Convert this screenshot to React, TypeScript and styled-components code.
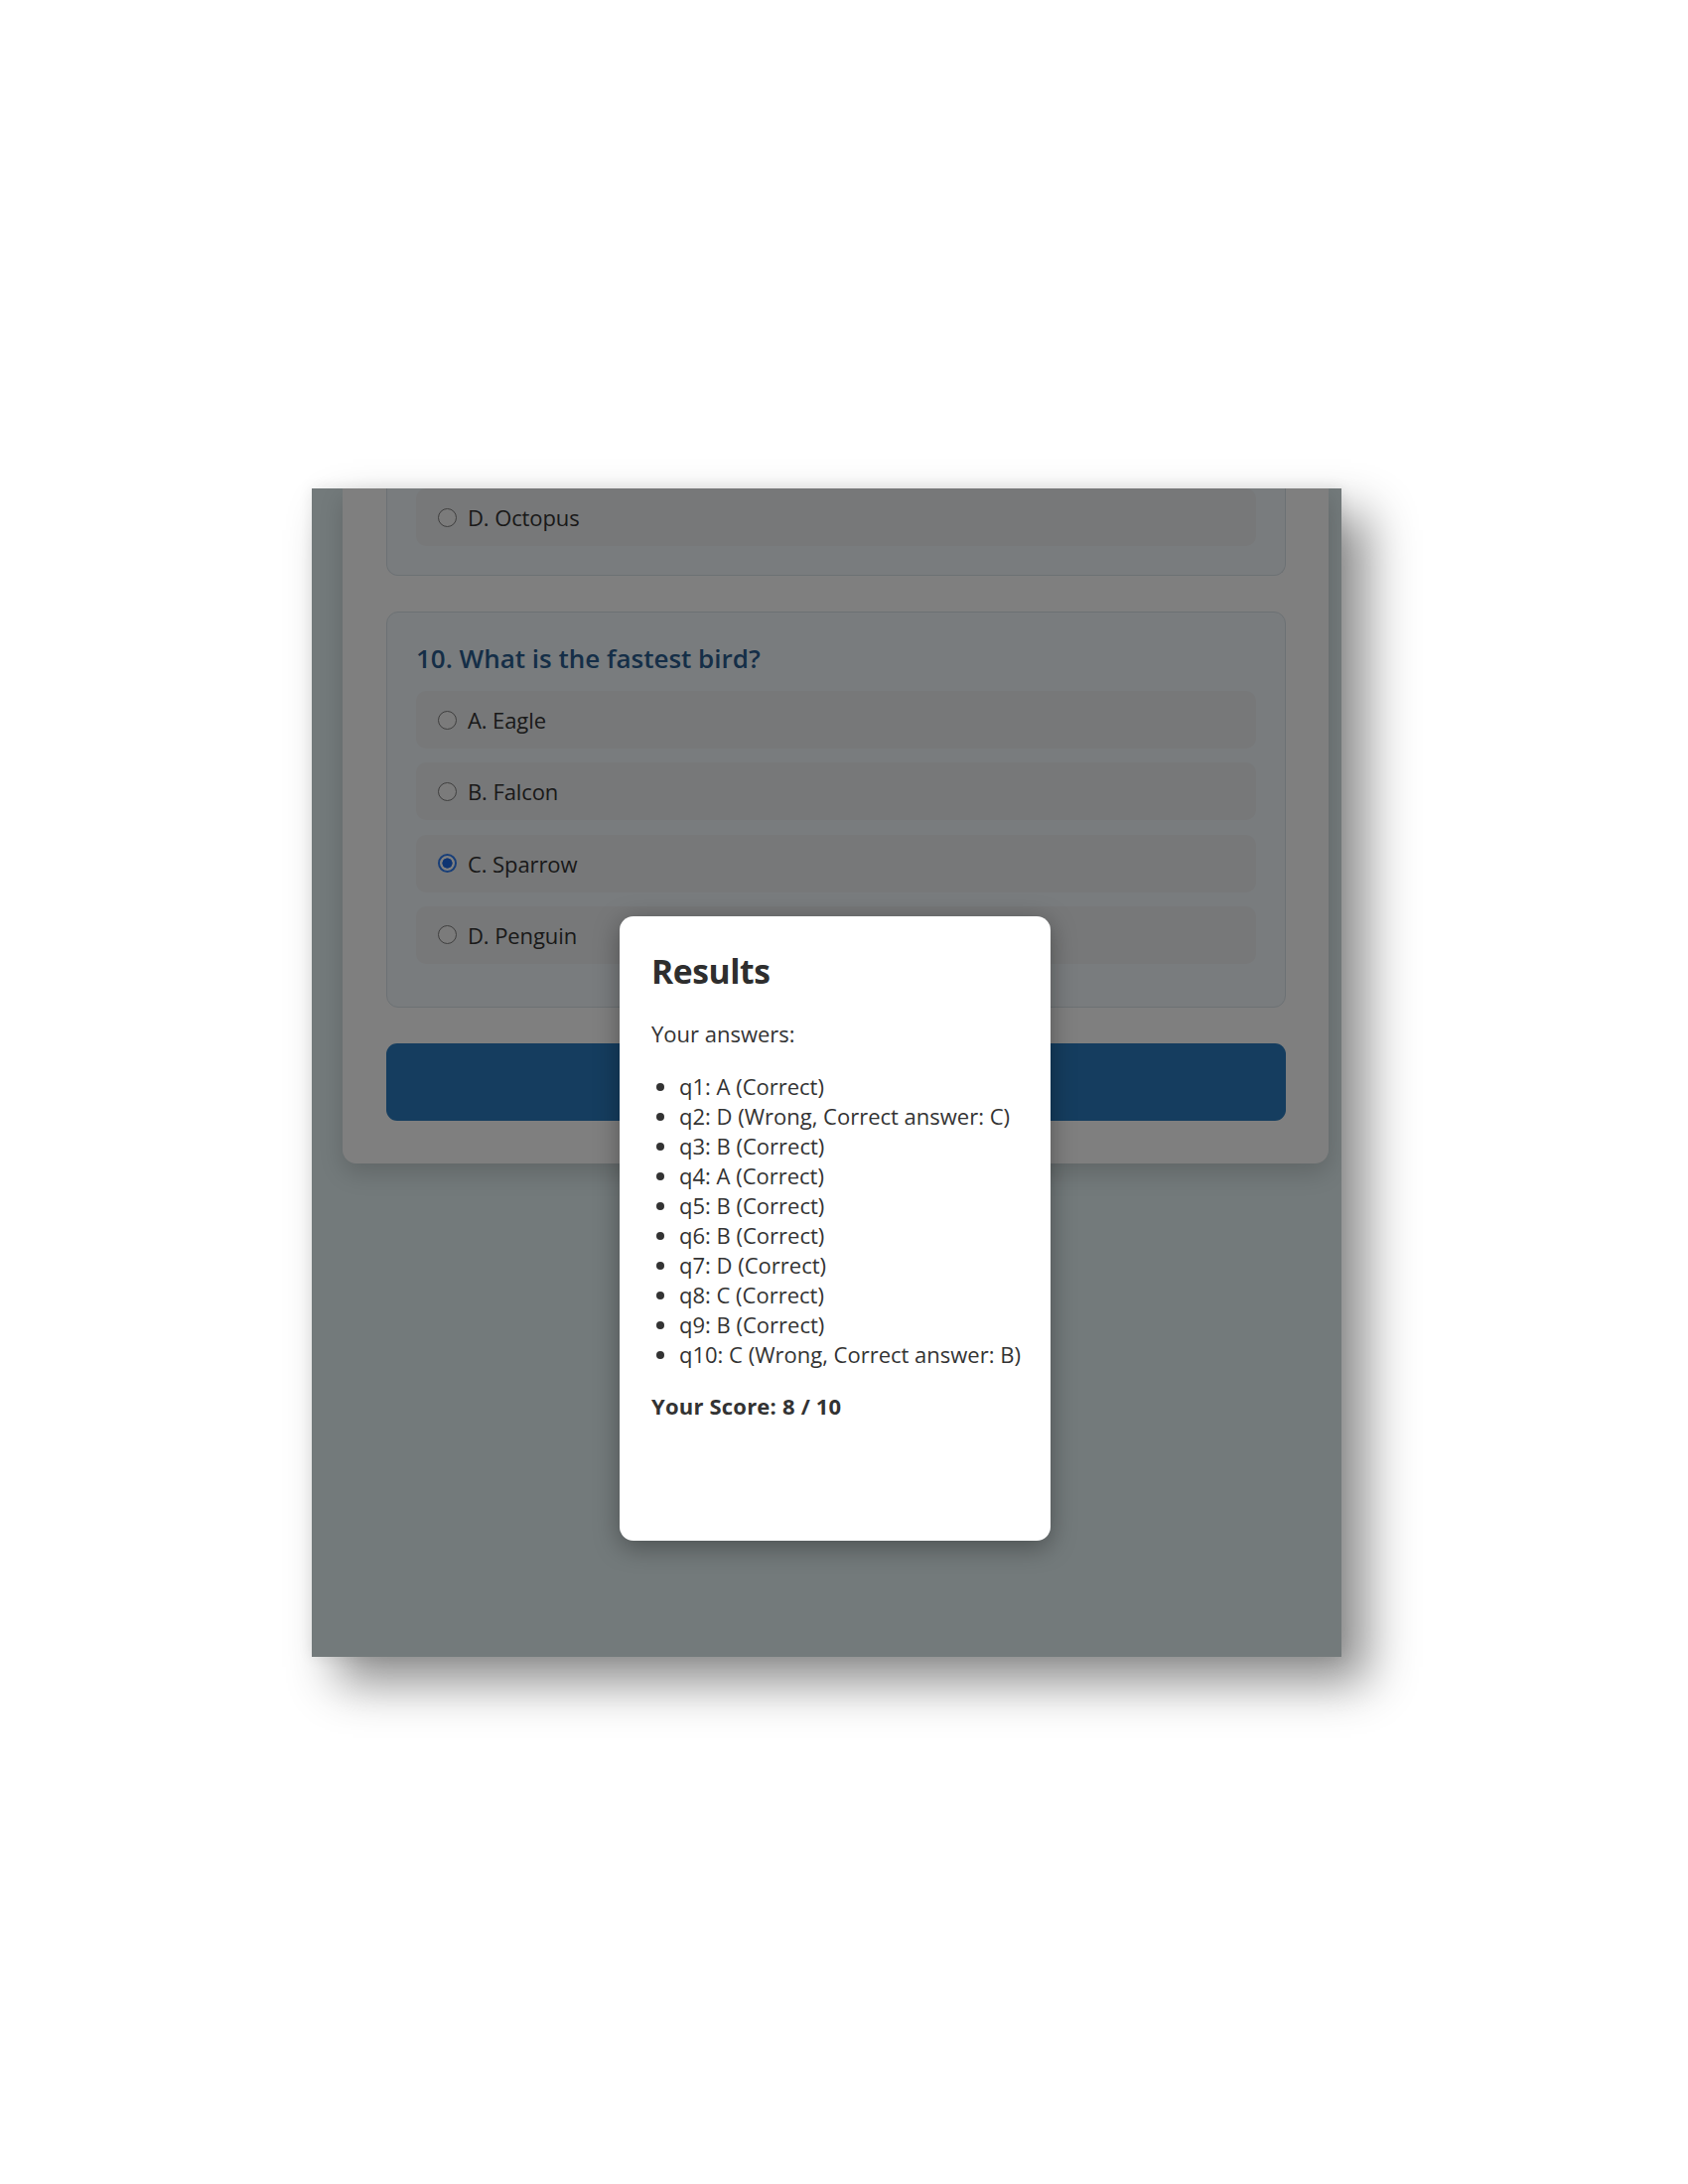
import React from "react";
import styled, { createGlobalStyle } from "styled-components";

const GlobalStyle = createGlobalStyle`
  html, body {
    margin: 0;
    padding: 0;
    background: #ffffff;
  }
  body {
    font-family: "Open Sans", "Noto Sans", "Liberation Sans", sans-serif;
    color: #333333;
  }
  * { box-sizing: border-box; }
`;

const Page = styled.div`
  width: 1700px;
  height: 2200px;
  padding: 492px 0 0 314px;
  background: #ffffff;
`;

const Screen = styled.div`
  position: relative;
  width: 1037px;
  height: 1177px;
  overflow: hidden;
  background: #e6f4f6;
  padding-left: 31px;
  box-shadow: 26px 26px 46px rgba(0, 0, 0, 0.45), 0 0 14px rgba(0, 0, 0, 0.09);
`;

const Container = styled.main`
  width: 993px;
  background: #ffffff;
  border-radius: 0 0 14px 14px;
  box-shadow: 0 10px 24px rgba(0, 0, 0, 0.16);
  padding: 0 43px 43px 44px;
  display: flex;
  flex-direction: column;
  gap: 36px;
`;

const Card = styled.section<{ $clipped?: boolean; $last?: boolean }>`
  background: #f2f9fd;
  border: 1.4px solid #d9e2e8;
  border-top: ${(p) => (p.$clipped ? "none" : "1.4px solid #d9e2e8")};
  border-radius: ${(p) => (p.$clipped ? "0 0 12px 12px" : "12px")};
  padding: ${(p) => (p.$clipped ? "0" : "29px")} 29px ${(p) => (p.$last ? "43px" : "29px")};
  display: flex;
  flex-direction: column;
`;

const QuestionTitle = styled.h3`
  margin: 0 0 15px;
  font-size: 26px;
  line-height: 35px;
  font-weight: 600;
  color: #2a5d8f;
`;

const Options = styled.div`
  display: flex;
  flex-direction: column;
  gap: 14.3px;
`;

const OptionRow = styled.label`
  display: flex;
  align-items: center;
  gap: 11px;
  height: 58px;
  padding: 0 22px;
  background: #eff0f2;
  border-radius: 10px;
  font-size: 22px;
  color: #333333;
  letter-spacing: -0.1px;
`;

const Radio = styled.input.attrs({ type: "radio" })`
  appearance: none;
  -webkit-appearance: none;
  margin: 0;
  width: 19px;
  height: 19px;
  flex: none;
  border-radius: 50%;
  border: 1.8px solid #7e7e7e;
  background: #f7f7f7;

  &:checked {
    border: 2px solid #2f7cf0;
    background: radial-gradient(circle, #1e6ae4 0 4.8px, #ffffff 5.4px);
  }
`;

const SubmitButton = styled.button`
  height: 78px;
  width: 100%;
  border: none;
  border-radius: 11px;
  background: #2a7bbe;
  color: #ffffff;
`;

const Overlay = styled.div`
  position: absolute;
  inset: 0;
  background: rgba(0, 0, 0, 0.5);
`;

const Modal = styled.div`
  position: absolute;
  left: 310px;
  top: 431px;
  width: 434px;
  min-height: 629px;
  background: #ffffff;
  border-radius: 14px;
  padding: 33px 20px 32px 32px;
  box-shadow: 0 6px 26px rgba(0, 0, 0, 0.35);
  color: #333333;
`;

const ModalTitle = styled.h2`
  margin: 0 0 26px;
  font-size: 33.6px;
  line-height: 44px;
  font-weight: 700;
  color: #2e2e2e;
  letter-spacing: -0.4px;
`;

const ModalText = styled.p`
  margin: 0 0 23px;
  font-size: 22px;
  line-height: 30px;
`;

const AnswerList = styled.ul`
  margin: 0 0 22px;
  padding-left: 28px;
  list-style: disc outside;
`;

const AnswerItem = styled.li`
  font-size: 22px;
  line-height: 30px;
  white-space: nowrap;
`;

const Score = styled.p`
  margin: 0;
  font-size: 22px;
  line-height: 30px;
  font-weight: 700;
  letter-spacing: 0.2px;
`;

const answers = [
  "q1: A (Correct)",
  "q2: D (Wrong, Correct answer: C)",
  "q3: B (Correct)",
  "q4: A (Correct)",
  "q5: B (Correct)",
  "q6: B (Correct)",
  "q7: D (Correct)",
  "q8: C (Correct)",
  "q9: B (Correct)",
  "q10: C (Wrong, Correct answer: B)",
];

const birdOptions = [
  { value: "A", label: "A. Eagle" },
  { value: "B", label: "B. Falcon" },
  { value: "C", label: "C. Sparrow" },
  { value: "D", label: "D. Penguin" },
];

export default function App() {
  return (
    <>
      <GlobalStyle />
      <Page>
        <Screen>
          <Container>
            <Card $clipped>
              <Options>
                <OptionRow>
                  <Radio name="q9" value="D" readOnly />
                  D. Octopus
                </OptionRow>
              </Options>
            </Card>
            <Card $last>
              <QuestionTitle>10. What is the fastest bird?</QuestionTitle>
              <Options>
                {birdOptions.map((o) => (
                  <OptionRow key={o.value}>
                    <Radio name="q10" value={o.value} defaultChecked={o.value === "C"} />
                    {o.label}
                  </OptionRow>
                ))}
              </Options>
            </Card>
            <SubmitButton type="button" aria-label="Submit" />
          </Container>
          <Overlay>
            <Modal role="dialog" aria-label="Results">
              <ModalTitle>Results</ModalTitle>
              <ModalText>Your answers:</ModalText>
              <AnswerList>
                {answers.map((a) => (
                  <AnswerItem key={a}>{a}</AnswerItem>
                ))}
              </AnswerList>
              <Score>Your Score: 8 / 10</Score>
            </Modal>
          </Overlay>
        </Screen>
      </Page>
    </>
  );
}
